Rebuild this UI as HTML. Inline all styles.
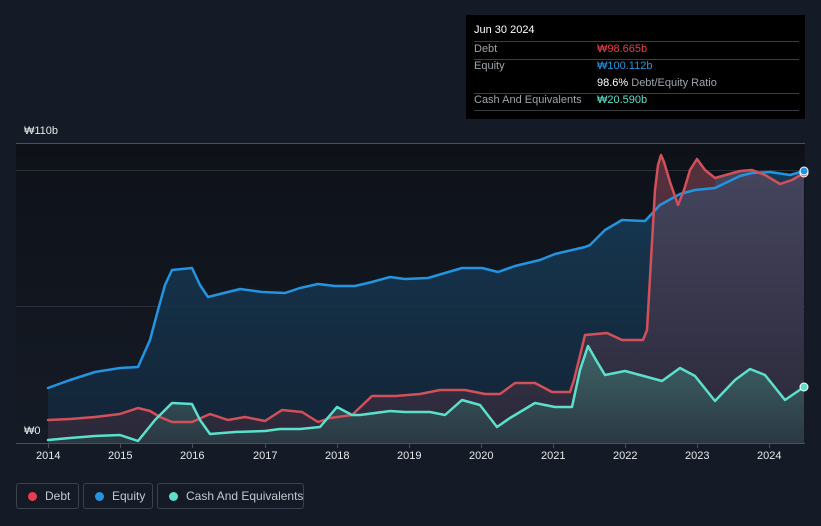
<!DOCTYPE html>
<html><head><meta charset="utf-8"><style>
body{margin:0;width:821px;height:526px;background:#151b26;font-family:"Liberation Sans","Noto Sans CJK KR",sans-serif;overflow:hidden;position:relative}
.tt{position:absolute;left:466px;top:15px;width:339px;height:104px;background:#000;color:#fff;font-size:11px}
.tt .r{position:absolute;left:8px;right:6px;border-top:1px solid #3a3d44}
.lbl{position:absolute;color:#9ea3ab;font-size:11px}
.lg{position:absolute;top:483px;height:26px;border:1px solid #3c424d;border-radius:3px;color:#c4c8ce;font-size:12px;line-height:25px;box-sizing:border-box;white-space:nowrap}
.lg i{display:inline-block;width:9px;height:9px;border-radius:50%;margin:0 8px 0 11px;vertical-align:-1px}
.ax{position:absolute;color:#e6e8ea;font-size:11px}
</style></head><body>
<svg width="821" height="526" style="position:absolute;left:0;top:0">
<defs>
<linearGradient id="bg" x1="0" y1="0" x2="0" y2="1"><stop offset="0" stop-color="#0e1118"/><stop offset="1" stop-color="#151b26"/></linearGradient>
<linearGradient id="eq" x1="0" y1="0" x2="0" y2="1"><stop offset="0" stop-color="#17405e" stop-opacity=".85"/><stop offset="1" stop-color="#13263a" stop-opacity=".8"/></linearGradient>
<linearGradient id="db" x1="0" y1="0" x2="0" y2="1"><stop offset="0" stop-color="#464660"/><stop offset="1" stop-color="#2a2838"/></linearGradient>
<linearGradient id="cs" x1="0" y1="0" x2="0" y2="1"><stop offset="0" stop-color="#3f6a6a"/><stop offset="1" stop-color="#2b3a44"/></linearGradient>
</defs>
<rect x="16" y="143" width="789" height="300" fill="url(#bg)"/>
<line x1="16" y1="143.5" x2="805" y2="143.5" stroke="#4a4f58"/>
<line x1="16" y1="170.5" x2="805" y2="170.5" stroke="#2a2f38"/>
<line x1="16" y1="306.5" x2="805" y2="306.5" stroke="#2a2f38"/>
<polygon fill="url(#eq)" points="48,443 48,388 70,380 95,372 120,368 138,367 150,340 158,310 165,285 172,270 192,268 200,285 208,297 220,294 240,289 262,292 285,293 300,288 318,284 335,286 355,286 372,282 390,277 405,279 428,278 445,273 462,268 482,268 498,272 515,266 540,260 555,254 585,247 590,245 605,230 622,220 645,221 660,205 680,194 695,190 715,188 740,176 752,173 770,172 790,175 804,171 804,443"/>
<polygon fill="url(#db)" points="48,443 48,420 70,419 95,417 120,414 138,408 150,411 160,417 172,422 192,422 210,414 228,420 245,417 265,421 282,410 302,412 318,422 330,418 352,415 372,396 395,396 420,394 440,390 465,390 485,394 500,394 515,383 535,383 552,392 570,392 574,380 585,335 607,333 622,340 643,340 647,330 651,260 655,190 658,165 661,155 664,162 670,182 678,205 684,190 690,170 697,159 705,170 715,178 740,171 752,170 765,175 780,184 792,180 804,173 804,443"/>
<polygon fill="#5a2a33" opacity=".75" points="653,230 655,190 658,165 661,155 664,162 670,182 675,196 660,205 653,215"/>
<polygon fill="#5a2a33" opacity=".75" points="682,194 684,190 690,170 697,159 705,170 715,178 715,188 695,190"/>
<polygon fill="url(#cs)" opacity=".9" points="48,443 48,440 70,438 95,436 120,435 138,441 155,420 172,403 192,404 200,420 210,434 235,432 265,431 280,429 300,429 320,427 337,407 352,415 360,415 390,411 405,412 430,412 445,415 462,400 480,405 497,427 510,418 535,403 555,407 572,407 580,370 588,346 596,360 605,375 625,371 640,375 662,381 680,368 695,376 715,401 735,380 750,369 765,375 785,400 804,387 804,443"/>
<g fill="none" stroke-width="2.5" stroke-linejoin="round" stroke-linecap="round">
<polyline stroke="#2394e0" points="48,388 70,380 95,372 120,368 138,367 150,340 158,310 165,285 172,270 192,268 200,285 208,297 220,294 240,289 262,292 285,293 300,288 318,284 335,286 355,286 372,282 390,277 405,279 428,278 445,273 462,268 482,268 498,272 515,266 540,260 555,254 585,247 590,245 605,230 622,220 645,221 660,205 680,194 695,190 715,188 740,176 752,173 770,172 790,175 804,171"/>
<polyline stroke="#d2505a" points="48,420 70,419 95,417 120,414 138,408 150,411 160,417 172,422 192,422 210,414 228,420 245,417 265,421 282,410 302,412 318,422 330,418 352,415 372,396 395,396 420,394 440,390 465,390 485,394 500,394 515,383 535,383 552,392 570,392 574,380 585,335 607,333 622,340 643,340 647,330 651,260 655,190 658,165 661,155 664,162 670,182 678,205 684,190 690,170 697,159 705,170 715,178 740,171 752,170 765,175 780,184 792,180 804,173"/>
<polyline stroke="#5ce0cc" points="48,440 70,438 95,436 120,435 138,441 155,420 172,403 192,404 200,420 210,434 235,432 265,431 280,429 300,429 320,427 337,407 352,415 360,415 390,411 405,412 430,412 445,415 462,400 480,405 497,427 510,418 535,403 555,407 572,407 580,370 588,346 596,360 605,375 625,371 640,375 662,381 680,368 695,376 715,401 735,380 750,369 765,375 785,400 804,387"/>
</g>
<circle cx="804" cy="173" r="4" fill="#e0404a" stroke="#fff" stroke-width="1"/>
<circle cx="804" cy="171" r="4" fill="#2394e0" stroke="#fff" stroke-width="1"/>
<circle cx="804" cy="387" r="4" fill="#5ce0cc" stroke="#fff" stroke-width="1"/>
<line x1="16" y1="443.5" x2="805" y2="443.5" stroke="#4a4f58"/>
<g stroke="#4a4f58"><line x1="48.5" y1="443" x2="48.5" y2="448"/><line x1="120.5" y1="443" x2="120.5" y2="448"/><line x1="192.5" y1="443" x2="192.5" y2="448"/><line x1="265.5" y1="443" x2="265.5" y2="448"/><line x1="337.5" y1="443" x2="337.5" y2="448"/><line x1="409.5" y1="443" x2="409.5" y2="448"/><line x1="481.5" y1="443" x2="481.5" y2="448"/><line x1="553.5" y1="443" x2="553.5" y2="448"/><line x1="625.5" y1="443" x2="625.5" y2="448"/><line x1="697.5" y1="443" x2="697.5" y2="448"/><line x1="769.5" y1="443" x2="769.5" y2="448"/></g>
</svg>
<div class="ax" style="left:24px;top:125px">₩110b</div>
<div class="ax" style="left:24px;top:425px">₩0</div>
<div class="ax" style="left:36px;top:450px">2014</div>
<div class="ax" style="left:108px;top:450px">2015</div>
<div class="ax" style="left:180px;top:450px">2016</div>
<div class="ax" style="left:253px;top:450px">2017</div>
<div class="ax" style="left:325px;top:450px">2018</div>
<div class="ax" style="left:397px;top:450px">2019</div>
<div class="ax" style="left:469px;top:450px">2020</div>
<div class="ax" style="left:541px;top:450px">2021</div>
<div class="ax" style="left:613px;top:450px">2022</div>
<div class="ax" style="left:685px;top:450px">2023</div>
<div class="ax" style="left:757px;top:450px">2024</div>
<div class="tt">
<div style="position:absolute;left:8px;top:9px">Jun 30 2024</div>
<div class="r" style="top:26px"></div>
<div class="lbl" style="left:8px;top:28px">Debt</div><div style="position:absolute;left:131px;top:28px;color:#e5404a">₩98.665b</div>
<div class="r" style="top:44px"></div>
<div class="lbl" style="left:8px;top:45px">Equity</div><div style="position:absolute;left:131px;top:45px;color:#2394e0">₩100.112b</div>
<div style="position:absolute;left:131px;top:62px">98.6% <span style="color:#9ea3ab">Debt/Equity Ratio</span></div>
<div class="r" style="top:78px"></div>
<div class="lbl" style="left:8px;top:79px">Cash And Equivalents</div><div style="position:absolute;left:131px;top:79px;color:#5ce0cc">₩20.590b</div>
<div class="r" style="top:95px"></div>
</div>
<div class="lg" style="left:16px;width:63px"><i style="background:#e5404a"></i>Debt</div>
<div class="lg" style="left:83px;width:70px"><i style="background:#2394e0"></i>Equity</div>
<div class="lg" style="left:157px;width:147px"><i style="background:#5ce0cc"></i>Cash And Equivalents</div>
</body></html>
